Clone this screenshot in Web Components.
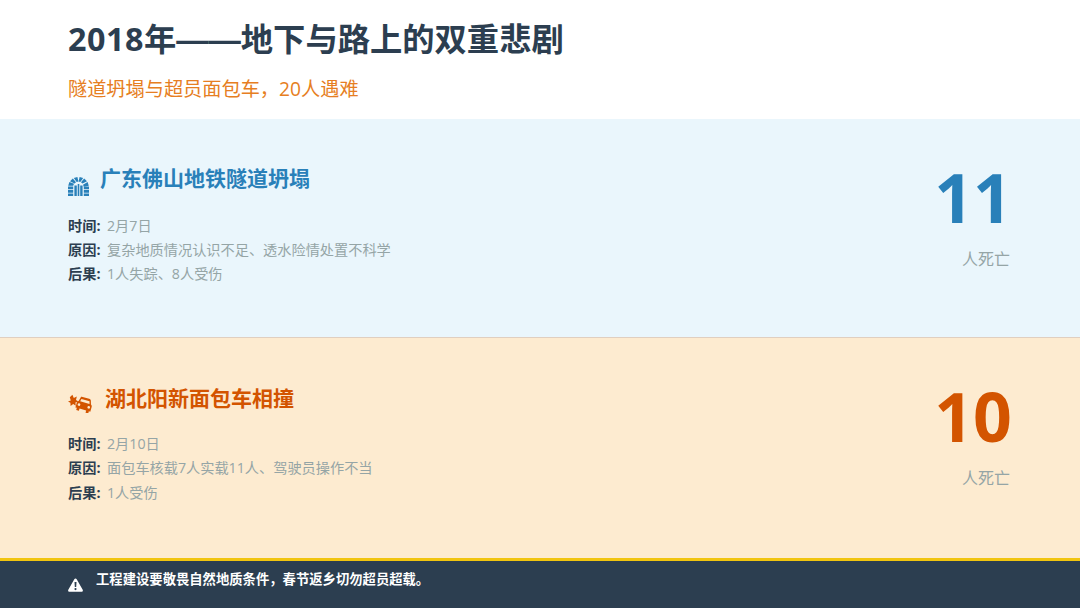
<!DOCTYPE html>
<html lang="zh">
<head>
<meta charset="utf-8">
<title>2018年</title>
<style>
	html, body { margin: 0; padding: 0; }
	body {
		width: 1080px;
		height: 608px;
		overflow: hidden;
		display: flex;
		flex-direction: column;
		font-family: "Open Sans", "Noto Sans CJK SC", sans-serif;
		background: #fff;
	}
	.year { letter-spacing: 0.5px; }
	.dash { font-family: "Liberation Sans", sans-serif; }
</style>
</head>
<body>
<slide-header>
	<span slot="title"><span class="year">2018</span>年<span class="dash">——</span>地下与路上的双重悲剧</span>
	<span slot="sub">隧道坍塌与超员面包车，20人遇难</span>
</slide-header>

<incident-panel tone="blue" count="11" time="2月7日" cause="复杂地质情况认识不足、透水险情处置不科学" result="1人失踪、8人受伤">
	<svg slot="icon" width="21" height="19" viewBox="0 0 21 19" fill="#2980b9">
		<path d="M0 9.500h5.200v2.800H0zM0 13h5.200v2.700H0zM0 16.400h5.200V19H0zM15.800 9.500H21v2.800h-5.200zM15.800 13H21v2.700h-5.200zM15.800 16.400H21V19h-5.200z"/>
		<path d="M.2 8.800 1.400 5l4.600 1.800-.8 2zM2 4.200 4.800 1.600l3.200 3.600-1.500 1.200zM5.800 1.100 9.400 0l1 4.500-1.700.4zM11.600 0l3.600 1.100-2.900 3.800-1.700-.4zM16.200 1.600 19 4.200l-4.500 2.200L13 5.200zM19.600 5l1.200 3.800-5 1-.8-2z"/>
		<path d="M6.400 8.500h2.400V19H6.400zM9.700 7h1.600v12H9.700zM12.200 8.500h2.400V19h-2.400z"/>
	</svg>
	<span slot="title">广东佛山地铁隧道坍塌</span>
</incident-panel>

<incident-panel tone="orange" count="10" time="2月10日" cause="面包车核载7人实载11人、驾驶员操作不当" result="1人受伤">
	<svg slot="icon" width="24" height="19" viewBox="0 0 24 19" fill="#d35400">
		<path d="M4.400.8 5.800 4 8.800 2.600 8 6l2.400 1.400-3 1.200.4 3.200-2.600-1.800L2.600 12l-.2-3.200L0 7.600l2.800-1.200-1-3.200z"/>
		<g transform="translate(8 3.500) rotate(16 7.500 7)">
			<path fill-rule="evenodd" d="M3.600 0h7.800c1 0 1.900.6 2.200 1.500L14.700 5c.8.400 1.300 1.200 1.300 2.100V12h-1.500v2.300h-2.800V12H4.800v2.300H2V12H.5V7.100C.5 6.200 1 5.400 1.800 5l.9-3.500C3 .6 2.600 0 3.600 0zM4 2.200 3.400 4.800h9.700l-.7-2.600zM3.200 7a1.300 1.300 0 1 0 0 2.600 1.300 1.300 0 0 0 0-2.600zM13.300 7a1.300 1.300 0 1 0 0 2.600 1.300 1.300 0 0 0 0-2.600z"/>
		</g>
	</svg>
	<span slot="title">湖北阳新面包车相撞</span>
</incident-panel>

<alert-bar>工程建设要敬畏自然地质条件，春节返乡切勿超员超载。</alert-bar>

<script>
class SlideHeader extends HTMLElement {
	constructor() {
		super();
		this.shadowDOM = this.attachShadow({ mode: "open" });
	}

	connectedCallback() {
		this.shadowDOM.innerHTML = `
			<style>
				:host {
					display: block;
					height: 119px;
					padding: 0 68px;
					box-sizing: border-box;
					flex: none;
				}
				h1 {
					margin: 0;
					padding-top: 17px;
					font-size: 32.3px;
					line-height: 42px;
					font-weight: 700;
					color: #2c3e50;
				}
				p {
					margin: 0;
					padding-top: 14px;
					font-size: 19.2px;
					line-height: 28px;
					color: #e67e22;
				}
			</style>
			<h1><slot name="title"></slot></h1>
			<p><slot name="sub"></slot></p>
		`;
	}
}

class IncidentPanel extends HTMLElement {
	constructor() {
		super();
		this.shadowDOM = this.attachShadow({ mode: "open" });
	}

	connectedCallback() {
		const get = (name) => this.getAttribute(name);
		this.shadowDOM.innerHTML = `
			<style>
				:host {
					display: flex;
					justify-content: space-between;
					box-sizing: border-box;
					padding: 0 68px;
					flex: none;
				}
				:host([tone="blue"]) {
					--accent: #2980b9;
					--row: 24px;
					--icon-top: 15px;
					--title-top: 1px;
					--after-head: 18px;
					background: #eaf6fc;
					height: 219px;
					border-bottom: 1px solid #e0cfc0;
				}
				:host([tone="orange"]) {
					--accent: #d35400;
					--row: 24.4px;
					--icon-top: 13px;
					--title-top: 2px;
					--after-head: 19px;
					background: #fdebd0;
					height: 220px;
				}
				.main { padding-top: 43px; }
				.head {
					display: flex;
					align-items: flex-start;
					gap: 11px;
					margin-bottom: var(--after-head);
				}
				.icon { display: flex; padding-top: var(--icon-top); }
				:host([tone="orange"]) .icon { margin-right: 2px; }
				h2 {
					margin: 0;
					padding-top: var(--title-top);
					font-size: 21px;
					line-height: 30px;
					font-weight: 700;
					color: var(--accent);
				}
				dl {
					margin: 0;
					display: grid;
					grid-template-columns: 39px auto;
					font-size: 14.2px;
					line-height: var(--row);
				}
				dt { font-weight: 700; color: #2c3e50; }
				dd { margin: 0; color: #95a5a6; }
				.stat {
					display: flex;
					flex-direction: column;
					align-items: flex-end;
					padding-top: 33px;
				}
				.num {
					font-size: 68px;
					line-height: 90px;
					font-weight: 700;
					color: var(--accent);
				}
				.unit {
					margin: 5px 2px 0 0;
					font-size: 16px;
					line-height: 24px;
					color: #95a5a6;
				}
			</style>
			<div class="main">
				<div class="head">
					<span class="icon"><slot name="icon"></slot></span>
					<h2><slot name="title"></slot></h2>
				</div>
				<dl>
					<dt>时间:</dt><dd>${get("time")}</dd>
					<dt>原因:</dt><dd>${get("cause")}</dd>
					<dt>后果:</dt><dd>${get("result")}</dd>
				</dl>
			</div>
			<div class="stat">
				<div class="num">${get("count")}</div>
				<div class="unit">人死亡</div>
			</div>
		`;
	}
}

class AlertBar extends HTMLElement {
	constructor() {
		super();
		this.shadowDOM = this.attachShadow({ mode: "open" });
	}

	connectedCallback() {
		this.shadowDOM.innerHTML = `
			<style>
				:host {
					display: flex;
					align-items: flex-start;
					gap: 13px;
					flex: 1;
					box-sizing: border-box;
					padding: 8px 68px 0;
					background: #2c3e50;
					border-top: 3px solid #f1c40f;
					color: #fff;
				}
				svg { margin-top: 9px; flex: none; }
				span {
					font-size: 13.33px;
					line-height: 20px;
					font-weight: 700;
				}
			</style>
			<svg width="15" height="14" viewBox="0 0 15 14">
				<path fill="#fff" d="M7.500.5c.5 0 .9.300 1.200.7l6 10.600c.5.900-.1 2-1.200 2H1.500c-1.100 0-1.700-1.100-1.200-2l6-10.600c.3-.4.700-.7 1.200-.7z"/>
				<path fill="#2c3e50" d="M6.500 4h2l-.3 5H6.800zM7.500 10a1.100 1.100 0 1 1 0 2.200 1.100 1.100 0 0 1 0-2.200z"/>
			</svg>
			<span><slot></slot></span>
		`;
	}
}

customElements.define("slide-header", SlideHeader);
customElements.define("incident-panel", IncidentPanel);
customElements.define("alert-bar", AlertBar);
</script>
</body>
</html>
